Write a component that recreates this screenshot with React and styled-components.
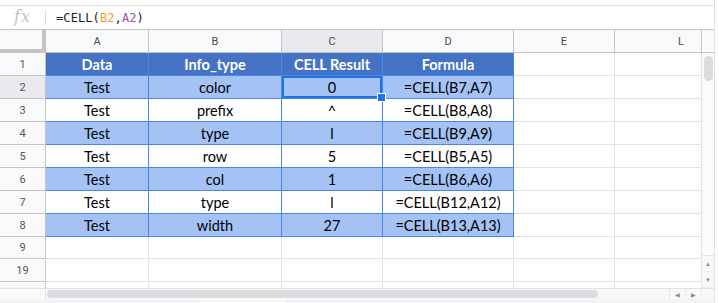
import React from "react";
import styled, { createGlobalStyle } from "styled-components";

const GlobalStyle = createGlobalStyle`
  html, body {
    margin: 0;
    padding: 0;
    background: #ffffff;
  }
  * {
    box-sizing: border-box;
  }
`;

const COLS = ["A", "B", "C", "D", "E", "L"];
const WIDTHS = [46, 103, 133, 101, 131, 101, 87];

const headers = ["Data", "Info_type", "CELL Result", "Formula"];
const rows = [
  ["Test", "color", "0", "=CELL(B7,A7)"],
  ["Test", "prefix", "^", "=CELL(B8,A8)"],
  ["Test", "type", "l", "=CELL(B9,A9)"],
  ["Test", "row", "5", "=CELL(B5,A5)"],
  ["Test", "col", "1", "=CELL(B6,A6)"],
  ["Test", "type", "l", "=CELL(B12,A12)"],
  ["Test", "width", "27", "=CELL(B13,A13)"],
];

const Window = styled.div`
  width: 715px;
  height: 303px;
  overflow: hidden;
  border-right: 1px solid #e0e0e0;
  padding-top: 5px;
  display: flex;
  flex-direction: column;
  font-family: Roboto, "Liberation Sans", sans-serif;
`;

const FormulaBar = styled.div`
  height: 25px;
  border-top: 1px solid #e1e1e1;
  border-bottom: 1px solid #c4c4c4;
  display: flex;
  align-items: center;
`;

const FxBox = styled.div`
  width: 46px;
  height: 15px;
  display: flex;
  align-items: center;
  justify-content: center;
  border-right: 1px solid #dadada;
  font-family: "DejaVu Serif", "Liberation Serif", serif;
  font-style: italic;
  font-size: 16px;
  color: #c2c2c2;
  letter-spacing: 1px;
  padding-bottom: 2px;
`;

const FormulaText = styled.div`
  margin-left: 10px;
  font-family: "DejaVu Sans Mono", "Liberation Mono", monospace;
  font-size: 12px;
  color: #222;
  letter-spacing: 0.1px;
`;

const Ref = styled.span`
  color: ${(p) => p.$color};
`;

const Body = styled.div`
  display: flex;
  height: 258px;
`;

const Sheet = styled.div`
  display: grid;
  grid-template-columns: ${WIDTHS.map((w) => w + "px").join(" ")};
  grid-auto-rows: 23px;
  align-content: start;
  width: 702px;
  overflow: hidden;
`;

const Corner = styled.div`
  background: #f8f9fa;
  border-right: 4px solid #c4c4c4;
  border-bottom: 4px solid #c4c4c4;
`;

const ColHead = styled.div`
  display: flex;
  align-items: center;
  justify-content: ${(p) => (p.$right ? "flex-end" : "center")};
  padding-right: ${(p) => (p.$right ? "17px" : "0")};
  background: ${(p) => (p.$active ? "#e8eaed" : "#f8f9fa")};
  border-right: 1px solid #c4c4c4;
  border-bottom: 1px solid #c4c4c4;
  font-size: 11px;
  color: #4a4a4a;
`;

const RowHead = styled.div`
  display: flex;
  align-items: center;
  justify-content: center;
  height: ${(p) => p.$h || 23}px;
  background: ${(p) => (p.$active ? "#e8eaed" : "#f8f9fa")};
  border-right: 1px solid #c4c4c4;
  border-bottom: 1px solid #c4c4c4;
  font-size: 11px;
  color: #555;
`;

const Cell = styled.div`
  position: relative;
  display: flex;
  align-items: center;
  justify-content: center;
  height: ${(p) => p.$h || 23}px;
  background: ${(p) =>
    p.$kind === "head" ? "#4472c4" : p.$kind === "band" ? "#a4c2f4" : "#ffffff"};
  border-right: 1px solid ${(p) => (p.$kind ? "#4a86e8" : "#e2e2e2")};
  border-bottom: 1px solid ${(p) => (p.$kind ? "#4a86e8" : "#e2e2e2")};
  font-family: Lato, "Open Sans", sans-serif;
  font-size: 14.5px;
  font-weight: ${(p) => (p.$kind === "head" ? 700 : 400)};
  color: ${(p) => (p.$kind === "head" ? "#ffffff" : "#000000")};
  padding-top: 1px;
  ${(p) =>
    p.$selected &&
    `
    box-shadow: inset 0 0 0 2px #1a73e8;
    z-index: 2;
    &::after {
      content: "";
      position: absolute;
      right: -4px;
      bottom: -4px;
      width: 7px;
      height: 7px;
      background: #1a73e8;
      border: 1px solid #ffffff;
    }
  `}
`;

const VScroll = styled.div`
  width: 12px;
  display: flex;
  flex-direction: column;
  background: #fbfbfb;
`;

const VScrollHead = styled.div`
  height: 23px;
  background: #f8f9fa;
  border-bottom: 1px solid #c4c4c4;
`;

const VTrack = styled.div`
  flex: 1;
  padding: 3px 1px 0 2px;
`;

const Thumb = styled.div`
  width: ${(p) => p.$w || "100%"};
  height: ${(p) => p.$h || "100%"};
  border-radius: 5px;
  background: #dadce0;
`;

const ArrowBox = styled.div`
  display: flex;
  flex-direction: ${(p) => (p.$row ? "row" : "column")};
  background: #f8f8f8;
  border-top: ${(p) => (p.$row ? "none" : "1px solid #e6e6e6")};
  border-left: ${(p) => (p.$row ? "1px solid #e6e6e6" : "none")};
`;

const ArrowBtn = styled.div`
  display: flex;
  align-items: center;
  justify-content: center;
  width: ${(p) => (p.$row ? "16px" : "12px")};
  height: ${(p) => (p.$row ? "10px" : "16px")};
  font-size: 6px;
  color: #8a8a8a;
  border-bottom: ${(p) => (p.$row ? "none" : "1px solid #eaeaea")};
  border-right: ${(p) => (p.$row ? "1px solid #eaeaea" : "none")};
`;

const HScroll = styled.div`
  display: flex;
  height: 11px;
  border-top: 1px solid #e2e2e2;
  background: #f8f8f8;
`;

const HScrollHead = styled.div`
  width: 46px;
  background: #f8f9fa;
  border-right: 1px solid #e2e2e2;
`;

const HTrack = styled.div`
  flex: 1;
  padding: 1px 0 1px 1px;
`;

const BottomStrip = styled.div`
  flex: 1;
  display: flex;
  background: #f1f3f4;
`;

const Tab = styled.div`
  width: ${(p) => p.$w}px;
  margin-left: ${(p) => p.$ml}px;
  background: ${(p) => p.$bg};
`;

export default function App() {
  return (
    <>
      <GlobalStyle />
      <Window>
        <FormulaBar>
          <FxBox>fx</FxBox>
          <FormulaText>
            =CELL(<Ref $color="#f29a38">B2</Ref>,<Ref $color="#9c4fb8">A2</Ref>)
          </FormulaText>
        </FormulaBar>

        <Body>
          <Sheet>
            <Corner />
            {COLS.map((c) => (
              <ColHead key={c} $active={c === "C"} $right={c === "L"}>
                {c}
              </ColHead>
            ))}

            <RowHead>1</RowHead>
            {headers.map((h) => (
              <Cell key={h} $kind="head">
                {h}
              </Cell>
            ))}
            <Cell />
            <Cell />

            {rows.map((r, i) => (
              <React.Fragment key={i}>
                <RowHead $active={i === 0}>{i + 2}</RowHead>
                {r.map((v, j) => (
                  <Cell
                    key={j}
                    $kind={i % 2 === 0 ? "band" : "plain"}
                    $selected={i === 0 && j === 2}
                  >
                    {v}
                  </Cell>
                ))}
                <Cell />
                <Cell />
              </React.Fragment>
            ))}

            {["9", "19", ""].map((n, i) => (
              <React.Fragment key={"e" + i}>
                <RowHead $h={i === 2 ? 8 : 22}>{n}</RowHead>
                {[0, 1, 2, 3, 4, 5].map((k) => (
                  <Cell key={k} $h={i === 2 ? 8 : 22} />
                ))}
              </React.Fragment>
            ))}
          </Sheet>

          <VScroll>
            <VScrollHead />
            <VTrack>
              <Thumb $h="25px" />
            </VTrack>
            <ArrowBox>
              <ArrowBtn>▲</ArrowBtn>
              <ArrowBtn>▼</ArrowBtn>
            </ArrowBox>
          </VScroll>
        </Body>

        <HScroll>
          <HScrollHead />
          <HTrack>
            <Thumb $w="551px" />
          </HTrack>
          <ArrowBox $row>
            <ArrowBtn $row>◀</ArrowBtn>
            <ArrowBtn $row>▶</ArrowBtn>
          </ArrowBox>
          <div style={{ width: 12 }} />
        </HScroll>

        <BottomStrip>
          <Tab $w={85} $ml={200} $bg="#fafafa" />
        </BottomStrip>
      </Window>
    </>
  );
}
